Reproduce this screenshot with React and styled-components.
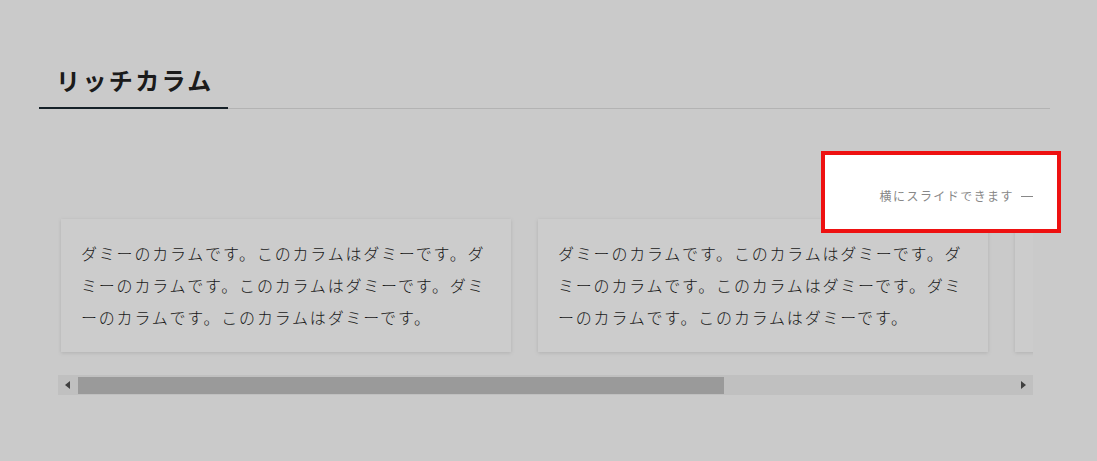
import styled, { createGlobalStyle } from "styled-components";

const GlobalStyle = createGlobalStyle`
  * { box-sizing: border-box; }
  body {
    margin: 0;
    background: #fdfdfd;
    font-family: "Noto Sans CJK JP", "Noto Sans", sans-serif;
    color: #333;
  }
`;

const columns = [
  "ダミーのカラムです。このカラムはダミーです。ダミーのカラムです。このカラムはダミーです。ダミーのカラムです。このカラムはダミーです。",
  "ダミーのカラムです。このカラムはダミーです。ダミーのカラムです。このカラムはダミーです。ダミーのカラムです。このカラムはダミーです。",
  "ダミーのカラムです。このカラムはダミーです。ダミーのカラムです。このカラムはダミーです。ダミーのカラムです。このカラムはダミーです。",
];

const App = () => {
  return (
    <>
      <GlobalStyle />
      <Section>
        <Heading>
          <HeadingText>リッチカラム</HeadingText>
        </Heading>
        <Body>
          <HintRow>
            <Hint>横にスライドできます</Hint>
          </HintRow>
          <Slider>
            <CardRow>
              {columns.map((text, i) => (
                <Card key={i}>{text}</Card>
              ))}
            </CardRow>
          </Slider>
          <ScrollBar>
            <ArrowButton>
              <Arrow $dir="left" />
            </ArrowButton>
            <Track>
              <Thumb $width={646} />
            </Track>
            <ArrowButton>
              <Arrow $dir="right" />
            </ArrowButton>
          </ScrollBar>
        </Body>
      </Section>
      {/* チュートリアル用のオーバーレイ */}
      <Overlay />
    </>
  );
};

export default App;

const Section = styled.section`
  margin-left: 39px;
  width: 1011px;
  padding-top: 62px;
`;
const Heading = styled.div`
  display: flex;
  border-bottom: 1px solid #e0e0e0;
`;
const HeadingText = styled.h2`
  margin: 0 0 -1px 0;
  padding: 0 14px 9px 17px;
  font-size: 24px;
  line-height: 36px;
  font-weight: 700;
  letter-spacing: 0.1em;
  color: #222;
  border-bottom: 2px solid #1c2a33;
`;
const Body = styled.div`
  padding: 0 17px 0 19px;
`;
const HintRow = styled.div`
  display: flex;
  justify-content: flex-end;
  margin-top: 78px;
`;
const Hint = styled.div`
  position: relative;
  z-index: 10;
  display: flex;
  align-items: center;
  padding: 32px 24px 24px 55px;
  margin: -32px -24px -24px -55px;
  background: #fff;
  outline: 4px solid #ee1111;
  font-size: 12px;
  line-height: 18px;
  letter-spacing: 0.12em;
  color: #888;
  &::after {
    content: "";
    width: 12px;
    height: 1px;
    margin-left: 7px;
    background: #888;
  }
`;
const Slider = styled.div`
  margin-top: 11px;
  overflow-x: auto;
  scrollbar-width: none;
`;
const CardRow = styled.div`
  display: flex;
  gap: 27px;
  width: max-content;
  padding: 3px 3px 23px;
`;
const Card = styled.div`
  width: 450px;
  padding: 18px 20px 19px;
  background: #fff;
  box-shadow: 0 1px 4px rgba(0, 0, 0, 0.13);
  font-size: 16px;
  font-weight: 300;
  line-height: 32px;
  letter-spacing: 1.8px;
  color: #1e1e1e;
`;
const ScrollBar = styled.div`
  display: flex;
  height: 20px;
  background: #f1f1f1;
`;
const ArrowButton = styled.div`
  width: 20px;
  display: flex;
  align-items: center;
  justify-content: center;
`;
const Arrow = styled.span`
  width: 0;
  height: 0;
  border-top: 4px solid transparent;
  border-bottom: 4px solid transparent;
  ${({ $dir }) =>
    $dir === "left"
      ? "border-right: 5px solid #505050; margin-left: -1px;"
      : "border-left: 5px solid #505050; margin-left: 1px;"}
`;
const Track = styled.div`
  flex: 1;
  display: flex;
  align-items: center;
`;
const Thumb = styled.div`
  width: ${({ $width }) => $width}px;
  height: 17px;
  background: #c1c1c1;
`;
const Overlay = styled.div`
  position: fixed;
  inset: 0;
  z-index: 5;
  background: rgba(0, 0, 0, 0.2);
`;
